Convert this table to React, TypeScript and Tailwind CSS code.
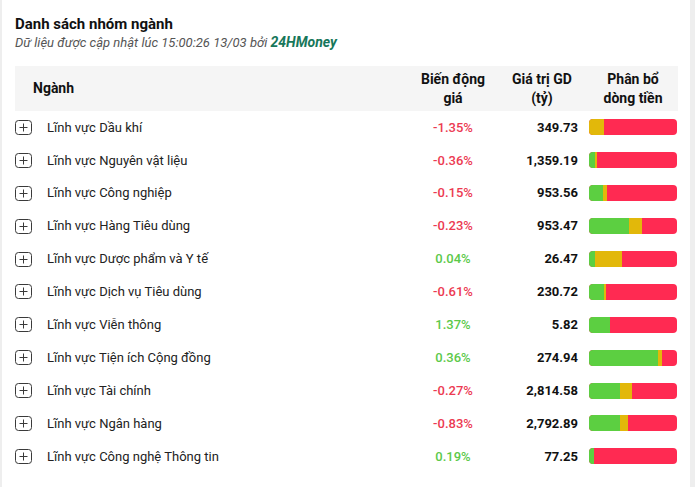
import React from "react";

type Row = { name: string; pct: string; val: string; g: number; y: number };

const rows: Row[] = [
  { name: "Lĩnh vực Dầu khí", pct: "-1.35%", val: "349.73", g: 0, y: 15 },
  { name: "Lĩnh vực Nguyên vật liệu", pct: "-0.36%", val: "1,359.19", g: 6, y: 2 },
  { name: "Lĩnh vực Công nghiệp", pct: "-0.15%", val: "953.56", g: 14, y: 4 },
  { name: "Lĩnh vực Hàng Tiêu dùng", pct: "-0.23%", val: "953.47", g: 40, y: 13 },
  { name: "Lĩnh vực Dược phẩm và Y tế", pct: "0.04%", val: "26.47", g: 6, y: 27 },
  { name: "Lĩnh vực Dịch vụ Tiêu dùng", pct: "-0.61%", val: "230.72", g: 15, y: 2 },
  { name: "Lĩnh vực Viễn thông", pct: "1.37%", val: "5.82", g: 21, y: 0 },
  { name: "Lĩnh vực Tiện ích Cộng đồng", pct: "0.36%", val: "274.94", g: 69, y: 4 },
  { name: "Lĩnh vực Tài chính", pct: "-0.27%", val: "2,814.58", g: 31, y: 12 },
  { name: "Lĩnh vực Ngân hàng", pct: "-0.83%", val: "2,792.89", g: 31, y: 8 },
  { name: "Lĩnh vực Công nghệ Thông tin", pct: "0.19%", val: "77.25", g: 5, y: 0 },
];

function PlusBox() {
  return (
    <svg width="17" height="15" viewBox="0 0 17 15" className="block">
      <rect x="0.5" y="0.5" width="16" height="14" rx="3" fill="none" stroke="#3a3a3a" strokeWidth="1" />
      <line x1="8.5" y1="3.5" x2="8.5" y2="11.5" stroke="#3a3a3a" strokeWidth="1" />
      <line x1="4.5" y1="7.5" x2="12.5" y2="7.5" stroke="#3a3a3a" strokeWidth="1" />
    </svg>
  );
}

export default function App() {
  return (
    <div
      className="w-[695px] h-[487px] bg-[#eeeeee] flex overflow-hidden"
      style={{ fontFamily: "Roboto, 'Liberation Sans', sans-serif" }}
    >
      <div className="ml-[2px] w-[688px] h-full bg-white pl-[13px] pr-[12px] pt-[14px]">
        <div className="text-[15px] leading-[20px] font-bold text-[#111]">Danh sách nhóm ngành</div>
        <div className="-mt-[1px] text-[13px] leading-[18px] italic text-[#555]">
          Dữ liệu được cập nhật lúc 15:00:26 13/03 bởi{" "}
          <span className="font-bold text-[14px] text-[#17775a]">24HMoney</span>
        </div>
        <div className="mt-[14px]">
          <div className="h-[45px] bg-[#f5f5f5] grid grid-cols-[32px_366px_80px_13px_72px_11px_88px_1px] items-center text-[14px] leading-[19px] font-bold text-[#111]">
            <div></div>
            <div className="-ml-[14px]">Ngành</div>
            <div className="text-center">Biến động<br />giá</div>
            <div></div>
            <div className="text-center">Giá trị GD<br />(tỷ)</div>
            <div></div>
            <div className="text-center">Phân bổ<br />dòng tiền</div>
            <div></div>
          </div>
          {rows.map((r) => {
            const up = !r.pct.startsWith("-");
            return (
              <div
                key={r.name}
                className="h-[32.9px] grid grid-cols-[32px_366px_80px_13px_72px_11px_88px_1px] items-center text-[13px]"
              >
                <div className="flex items-center">
                  <PlusBox />
                </div>
                <div className="text-[#222]">{r.name}</div>
                <div className={`text-center font-medium ${up ? "text-[#5cc94a]" : "text-[#ec3a52]"}`}>{r.pct}</div>
                <div></div>
                <div className="text-right font-bold text-[#111]">{r.val}</div>
                <div></div>
                <div className="h-[16px] rounded-[4px] overflow-hidden flex bg-[#ff2a52]">
                  <div className="h-full bg-[#5ccf41]" style={{ width: r.g }} />
                  <div className="h-full bg-[#e2b80a]" style={{ width: r.y }} />
                </div>
                <div></div>
              </div>
            );
          })}
        </div>
      </div>
    </div>
  );
}
